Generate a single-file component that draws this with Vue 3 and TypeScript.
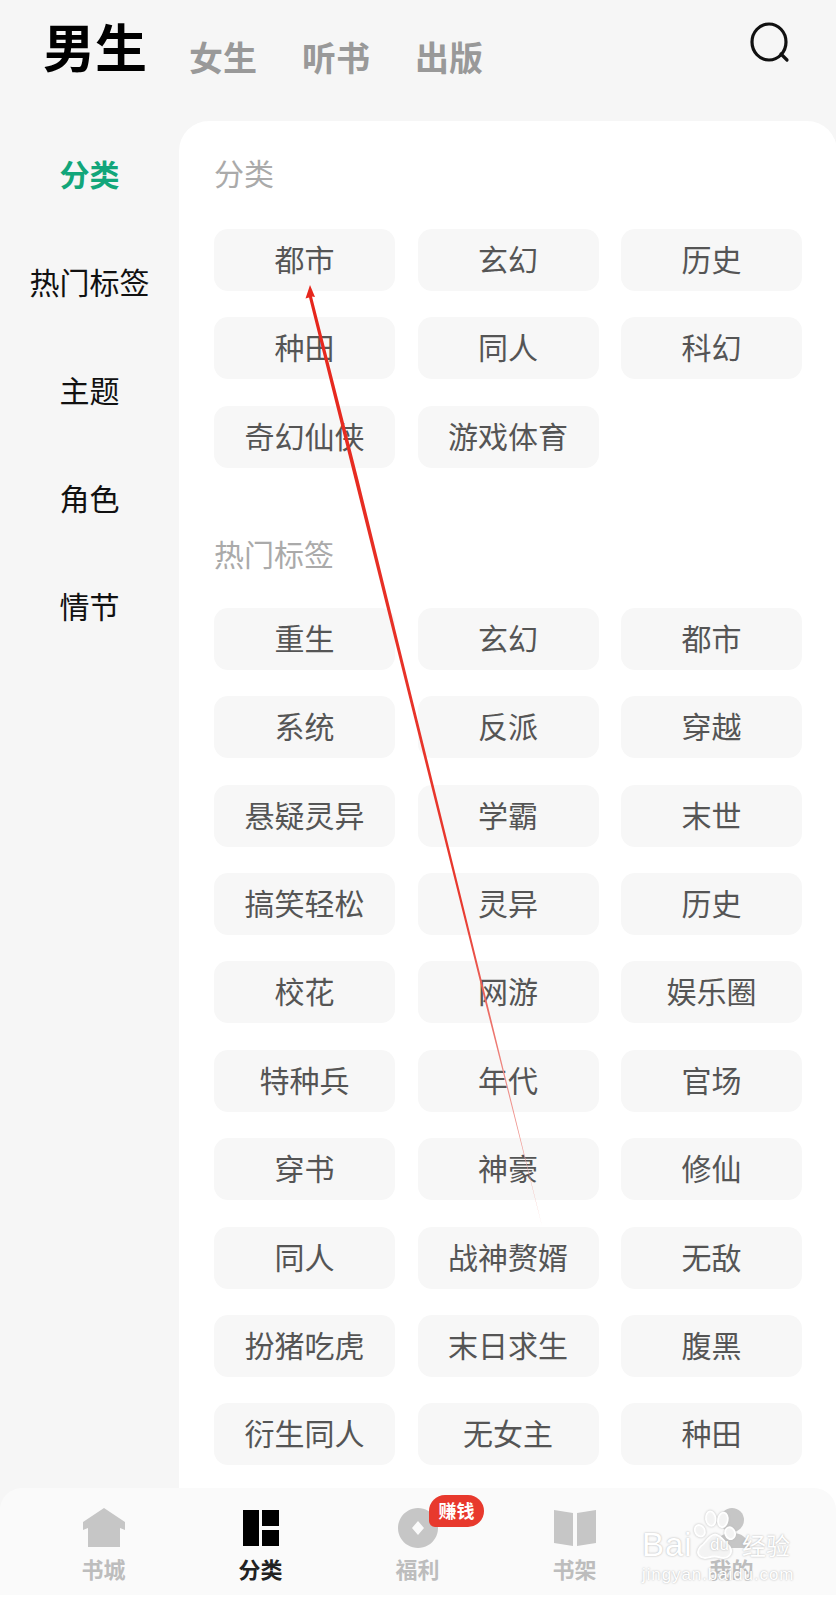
<script setup lang="ts">
interface Tab {
  key: string
  label: string
  active?: boolean
}

const topTabs = ['女生', '听书', '出版']
const sideItems = ['分类', '热门标签', '主题', '角色', '情节']

const categories = ['都市', '玄幻', '历史', '种田', '同人', '科幻', '奇幻仙侠', '游戏体育']
const hotTags = [
  '重生', '玄幻', '都市',
  '系统', '反派', '穿越',
  '悬疑灵异', '学霸', '末世',
  '搞笑轻松', '灵异', '历史',
  '校花', '网游', '娱乐圈',
  '特种兵', '年代', '官场',
  '穿书', '神豪', '修仙',
  '同人', '战神赘婿', '无敌',
  '扮猪吃虎', '末日求生', '腹黑',
  '衍生同人', '无女主', '种田',
]

const tabs: Tab[] = [
  { key: 'home', label: '书城' },
  { key: 'category', label: '分类', active: true },
  { key: 'bonus', label: '福利' },
  { key: 'shelf', label: '书架' },
  { key: 'me', label: '我的' },
]
</script>

<template>
  <div class="page">
    <header class="top">
      <span class="top-current">男生</span>
      <span v-for="t in topTabs" :key="t" class="top-tab">{{ t }}</span>
      <svg class="search" width="42" height="42" viewBox="0 0 42 42" fill="none" stroke="#111" stroke-width="3.2">
        <ellipse cx="19" cy="20" rx="17" ry="18" />
        <path d="M31 32l6 6" stroke-linecap="round" />
      </svg>
    </header>

    <div class="main">
      <nav class="side">
        <div v-for="(s, i) in sideItems" :key="s" class="side-item" :class="{ active: i === 0 }">{{ s }}</div>
      </nav>
      <section class="card">
        <h2 class="sec-title">分类</h2>
        <div class="chips">
          <div v-for="(c, i) in categories" :key="i" class="chip">{{ c }}</div>
        </div>
        <h2 class="sec-title second">热门标签</h2>
        <div class="chips">
          <div v-for="(c, i) in hotTags" :key="i" class="chip">{{ c }}</div>
        </div>
      </section>
    </div>

    <footer class="tabbar">
      <div v-for="t in tabs" :key="t.key" class="tab" :class="{ active: t.active }">
        <svg class="tab-icon" width="48" height="42" viewBox="0 0 48 42">
          <path v-if="t.key === 'home'" d="M24 1 45 15V23L40 21V40H8V21L3 23V15Z" fill="#c6c6c6" />
          <g v-else-if="t.key === 'category'" fill="#000">
            <rect x="6" y="3" width="16" height="36" />
            <rect x="25" y="3" width="17" height="16" />
            <rect x="25" y="23" width="17" height="16" />
          </g>
          <path
            v-else-if="t.key === 'bonus'"
            fill-rule="evenodd"
            d="M24 1a20 20 0 1 0 .01 0ZM24 14l6 7-6 7-6-7Z"
            fill="#c6c6c6"
          />
          <path v-else-if="t.key === 'shelf'" d="M3 3 22 6V39L3 36ZM26 6 45 3V36L26 39Z" fill="#c6c6c6" />
          <g v-else fill="#c6c6c6">
            <circle cx="24" cy="13" r="12" />
            <path d="M6 41C8 30 15 26 24 26S40 30 42 41Z" />
          </g>
        </svg>
        <span class="tab-label">{{ t.label }}</span>
        <span v-if="t.key === 'bonus'" class="badge">赚钱</span>
      </div>
    </footer>

    <!-- annotation arrow drawn on top of the screenshot -->
    <svg class="arrow" width="836" height="1600" viewBox="0 0 836 1600">
      <defs>
        <linearGradient id="arrowFade" gradientUnits="userSpaceOnUse" x1="310" y1="285" x2="542" y2="1226">
          <stop offset="0" stop-color="#e6261c" />
          <stop offset="0.66" stop-color="#e8392f" />
          <stop offset="0.84" stop-color="#ee8a84" />
          <stop offset="1" stop-color="#f2b5b0" />
        </linearGradient>
      </defs>
      <path d="M310 285 315 297 312 296.5 358.5 480 486.5 1000 542 1226 484.6 1000 355 481 309 297.5 305.5 298.5Z" fill="url(#arrowFade)" />
    </svg>

    <!-- image host watermark -->
    <div class="mark">
      <svg class="paw" width="46" height="50" viewBox="0 0 76 82" fill="rgba(251,251,251,0.88)" stroke="#fff" stroke-width="3">
        <ellipse cx="13" cy="34" rx="8" ry="10" transform="rotate(-30 13 34)" />
        <ellipse cx="31" cy="14" rx="8" ry="12" transform="rotate(-8 31 14)" />
        <ellipse cx="51" cy="16" rx="8" ry="12" transform="rotate(10 51 16)" />
        <ellipse cx="63" cy="38" rx="8" ry="10" transform="rotate(-20 63 38)" />
        <path d="M38 40C50 42 54 54 62 60 70 72 58 82 46 78 40 76 34 76 28 78 14 82 4 72 14 60 24 54 26 42 38 40Z" />
      </svg>
      <span class="mark-bai">Bai</span>
      <span class="mark-du">du</span>
      <span class="mark-cn">经验</span>
      <span class="mark-url">jingyan.baidu.com</span>
    </div>
  </div>
</template>

<style>
body {
  background: #fff;
}
</style>

<style scoped>
.page {
  position: relative;
  width: 836px;
  height: 1600px;
  overflow: hidden;
  background: #fff;
  font-family: "Noto Sans CJK SC", "Noto Sans", sans-serif;
}

.top {
  display: flex;
  align-items: flex-end;
  gap: 45px;
  height: 121px;
  box-sizing: border-box;
  padding: 0 0 42px 43px;
  background: #f6f6f6;
  position: relative;
}

.top-current {
  font-size: 52px;
  line-height: 60px;
  font-weight: 700;
  color: #000;
  position: relative;
  top: -3px;
  margin-right: -3px;
}

.top-tab {
  font-size: 34px;
  line-height: 44px;
  font-weight: 700;
  color: #999;
}

.search {
  position: absolute;
  right: 44px;
  top: 22px;
}

.main {
  display: flex;
  height: 1387px;
  background: #f6f6f6;
}

.side {
  flex: 0 0 179px;
  display: flex;
  flex-direction: column;
  margin-top: -2px;
}

.side-item {
  height: 108px;
  line-height: 108px;
  text-align: center;
  font-size: 30px;
  color: #111;
}

.side-item.active {
  color: #12a67a;
  font-weight: 700;
}

.card {
  flex: 1;
  background: #fff;
  border-radius: 30px 30px 0 0;
  padding: 29px 35px 0;
}

.sec-title {
  margin: 0 0 35px;
  font-size: 30px;
  line-height: 44px;
  font-weight: 400;
  color: #aaa;
}

.sec-title.second {
  margin: 63px 0 33px;
}

.chips {
  display: grid;
  grid-template-columns: repeat(3, 181px);
  column-gap: 22.5px;
  row-gap: 26.4px;
}

.chip {
  height: 62px;
  line-height: 59px;
  text-align: center;
  font-size: 30px;
  color: #555;
  background: #f7f7f7;
  border-radius: 14px;
}

.tabbar {
  position: relative;
  display: flex;
  height: 107px;
  margin-top: -20px;
  padding: 0 25px;
  background: #fafafa;
  border-radius: 22px 22px 0 0;
}

.tab {
  position: relative;
  flex: 0 0 157px;
  display: flex;
  flex-direction: column;
  align-items: center;
  padding-top: 19px;
  box-sizing: border-box;
}

.tab-icon {
  display: block;
}

.tab-label {
  margin-top: 5px;
  font-size: 22px;
  line-height: 28px;
  font-weight: 700;
  color: #bdbdbd;
}

.tab.active .tab-label {
  color: #222;
}

.badge {
  position: absolute;
  left: 90px;
  top: 7px;
  width: 55px;
  height: 32px;
  line-height: 31px;
  text-align: center;
  font-size: 18px;
  font-weight: 700;
  color: #fff;
  background: #e8392d;
  border-radius: 16px 16px 16px 6px;
}

.arrow {
  position: absolute;
  left: 0;
  top: 0;
  pointer-events: none;
}

.mark {
  position: absolute;
  left: 640px;
  top: 1505px;
  width: 156px;
  height: 82px;
  color: #fff;
  font-family: "Liberation Sans", sans-serif;
  text-shadow: 0 0 2px #aaa;
  pointer-events: none;
}

.paw {
  position: absolute;
  left: 52px;
  top: 5px;
  filter: drop-shadow(0 0 1px #bbb);
}

.mark-bai {
  position: absolute;
  left: 2px;
  top: 23px;
  font-size: 33px;
  line-height: 33px;
  letter-spacing: 1px;
}

.mark-du {
  position: absolute;
  left: 70px;
  top: 29px;
  font-size: 17px;
  line-height: 22px;
  color: #fff;
}

.mark-cn {
  position: absolute;
  left: 102px;
  top: 24px;
  font-family: "Noto Sans CJK SC", sans-serif;
  font-size: 24px;
  line-height: 32px;
}

.mark-url {
  position: absolute;
  left: 2px;
  top: 60px;
  font-size: 17px;
  line-height: 20px;
  letter-spacing: 0.9px;
}
</style>
